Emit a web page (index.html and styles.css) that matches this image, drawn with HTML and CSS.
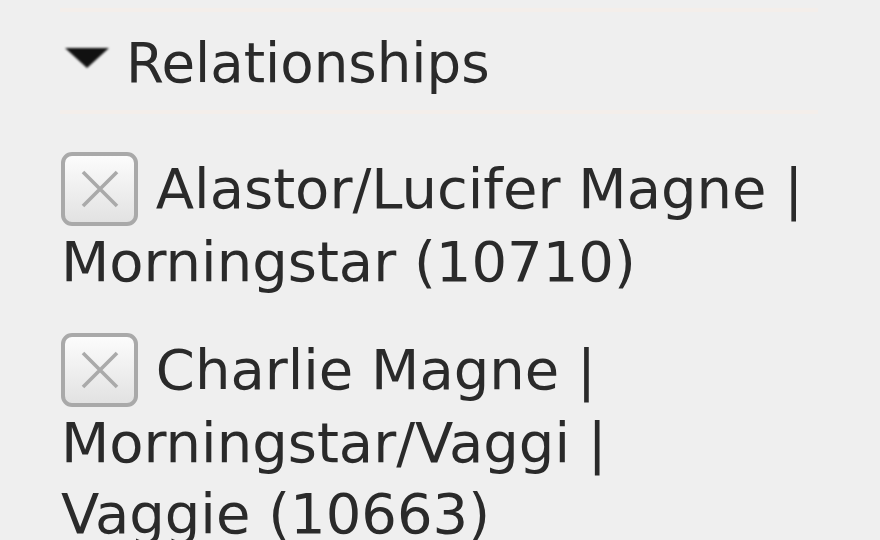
FILE: index.html
```html
<!DOCTYPE html>
<html lang="en">
<head>
    <meta charset="UTF-8">
    <meta name="viewport" content="width=device-width, initial-scale=1.0">
    <title>Filters</title>
    <link rel="stylesheet" href="styles.css">
</head>
<body>
    <div class="filters">
        <div class="rule"></div>
        <h3 class="filter-heading">
            <svg class="toggle" width="46" height="22" viewBox="0 0 46 22">
                <polygon points="1,1 45,1 23,21" fill="#111"/>
            </svg>
            Relationships
        </h3>
        <div class="rule"></div>
        <ul class="tag-list">
            <li>
                <label><span class="exclude"><svg width="40" height="40" viewBox="0 0 40 40"><path d="M3 3 L37 37 M37 3 L3 37" stroke="#aaa" stroke-width="3.6"/></svg></span> Alastor/Lucifer Magne | Morningstar (10710)</label>
            </li>
            <li>
                <label><span class="exclude"><svg width="40" height="40" viewBox="0 0 40 40"><path d="M3 3 L37 37 M37 3 L3 37" stroke="#aaa" stroke-width="3.6"/></svg></span> Charlie Magne | Morningstar/Vaggi | Vaggie (10663)</label>
            </li>
        </ul>
    </div>
</body>
</html>
```

FILE: styles.css
```css
body {
    margin: 0;
    padding: 0;
    background-color: #efefef;
    color: #2a2a2a;
    font-family: "DejaVu Sans", Verdana, sans-serif;
}

.filters {
    width: 758px;
    margin-left: 60px;
}

.rule {
    height: 4px;
    background-color: #f4eeea;
}

.rule:first-child {
    margin-top: 8px;
}

.filter-heading {
    display: flex;
    align-items: center;
    margin: 15px 0 11px 4px;
    font-size: 54.6px;
    font-weight: normal;
    line-height: 72px;
}

.toggle {
    margin-right: 16px;
    margin-top: -10px;
    filter: blur(0.8px);
}

.tag-list {
    list-style: none;
    margin: 38px 0 0;
    padding: 0 10px 0 1px;
}

.tag-list li {
    font-size: 56px;
    line-height: 71px;
    margin-bottom: 36px;
}

.exclude {
    display: inline-block;
    box-sizing: border-box;
    width: 77px;
    height: 74px;
    vertical-align: -18px;
    border: 4px solid #a9a9a9;
    border-radius: 11px;
    background: linear-gradient(#fcfcfc, #e2e2e2);
}

.exclude svg {
    display: block;
    margin: 13px auto 0;
}
```
